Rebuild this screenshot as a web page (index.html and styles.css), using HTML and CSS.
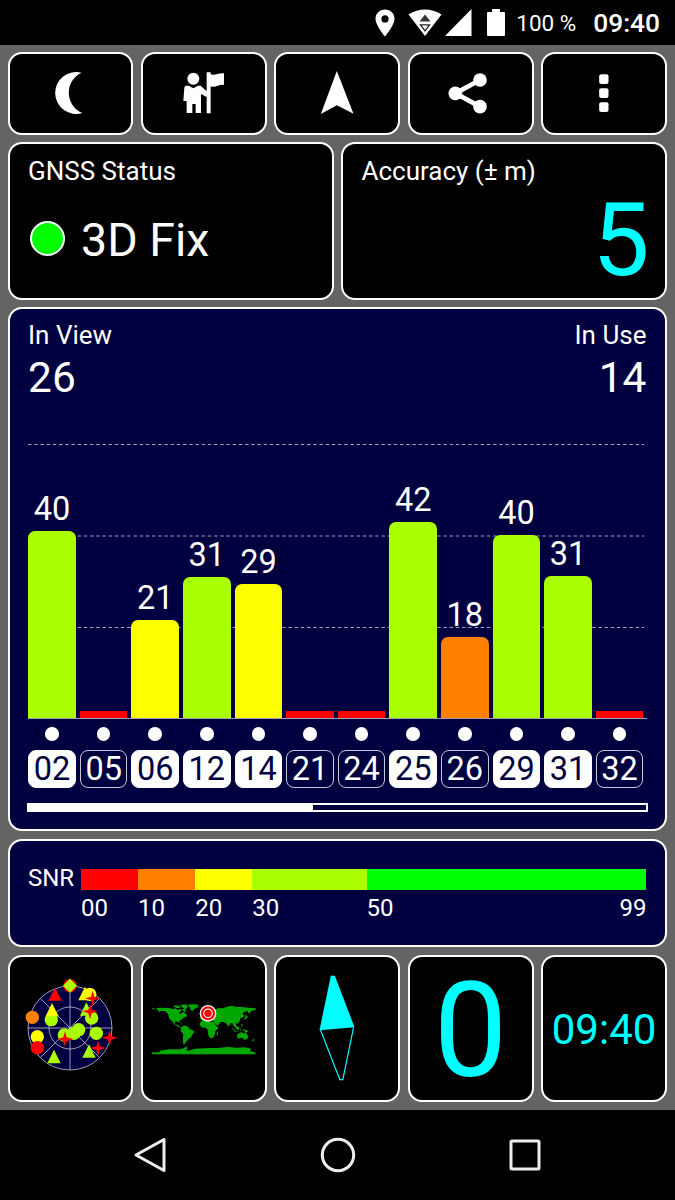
FILE: index.html
```
<!DOCTYPE html>
<html lang="en">
<head>
  <meta charset="UTF-8">
  <title>GNSS Status</title>
  <link rel="stylesheet" href="styles.css">
</head>
<body>
  <header class="statusbar">
    <svg class="pin" width="20" height="28" viewBox="0 0 20 28"><path fill="#fff" fill-rule="evenodd" d="M10 .5C4.600 .5 .5 4.500 .5 9.800C.5 16.500 10 27.500 10 27.500S19.500 16.500 19.500 9.800C19.500 4.500 15.400 .5 10 .5zM10 6.300a3.600 3.600 0 1 1 0 7.200a3.600 3.600 0 0 1 0-7.200z"/></svg>
    <svg class="wifi" width="34" height="28" viewBox="0 0 34 28">
      <path fill="#fff" d="M.5 5.500Q17-4.500 33.500 5.500L17 27z"/>
      <path fill="#333" d="M17 5.500L22.500 12.500H11.500z"/>
      <path fill="#fff" stroke="#222" stroke-width="1.300" d="M12.500 15.800H21.500L17 21.800z"/>
    </svg>
    <svg class="signal" width="27" height="27" viewBox="0 0 27 27"><path fill="#fff" d="M26.500 0V27H0z"/></svg>
    <svg class="battery" width="18" height="27" viewBox="0 0 18 27"><path fill="#fff" d="M5 0H13V3H17Q18 3 18 4V26Q18 27 17 27H1Q0 27 0 26V4Q0 3 1 3H5z"/></svg>
    <span class="percent">100 %</span>
    <span class="clock">09:40</span>
  </header>

  <main class="screen">
    <nav class="toolbar">
      <button class="tile">
        <svg width="48" height="48" viewBox="139.500 89 144 144"><path fill="#fff" d="M246 100A63 63 0 1 0 249 221A66 66 0 0 1 246 100z"/></svg>
      </button>
      <button class="tile">
        <svg width="48" height="48" viewBox="540 89 144 144">
          <circle cx="580" cy="118" r="18" fill="#fff"/>
          <path fill="#fff" d="M557 139H566L580 147L594 139H602L620 156V99H632V105C646 110 656 99 672 102V137C656 134 647 147 632 141V222H620V173L603 164V221H587V194H577V221H560V186L550 184L553 146Q554 140 557 139z"/>
        </svg>
      </button>
      <button class="tile">
        <svg width="48" height="48" viewBox="-64.500 89 144 144"><path fill="#fff" d="M7 95L57 223L7 198L-41 224z"/></svg>
      </button>
      <button class="tile">
        <svg width="48" height="48" viewBox="336 89 144 144">
          <path fill="none" stroke="#fff" stroke-width="14" d="M435 122L361 162L435 202"/>
          <circle cx="435" cy="122" r="20.500" fill="#fff"/>
          <circle cx="361" cy="162" r="20.500" fill="#fff"/>
          <circle cx="435" cy="202" r="20.500" fill="#fff"/>
        </svg>
      </button>
      <button class="tile">
        <svg width="48" height="48" viewBox="736.500 89 144 144" fill="#fff">
          <rect x="794" y="105" width="28" height="29" rx="6"/>
          <rect x="794" y="147" width="28" height="29" rx="6"/>
          <rect x="794" y="189" width="28" height="29" rx="6"/>
        </svg>
      </button>
    </nav>

    <section class="summary">
      <div class="card">
        <div class="title">GNSS Status</div>
        <div class="fix"><span class="led"></span>3D Fix</div>
      </div>
      <div class="card">
        <div class="title">Accuracy (± m)</div>
        <div class="accuracy">5</div>
      </div>
    </section>

    <section class="card blue chart">
      <div class="counts">
        <div><div class="title">In View</div><div class="count">26</div></div>
        <div class="right"><div class="title">In Use</div><div class="count">14</div></div>
      </div>

      <div class="plot">
        <svg class="lines" width="619" height="317" viewBox="0 0 619 317">
          <path d="M0 42.500H616M0 134H616M0 225.500H616"/>
        </svg>
        <div class="col"><span>40</span><div class="bar lime" style="height:187.500px"></div></div>
        <div class="col"><div class="bar none"></div></div>
        <div class="col"><span>21</span><div class="bar yellow" style="height:98.500px"></div></div>
        <div class="col"><span>31</span><div class="bar lime" style="height:141.500px"></div></div>
        <div class="col"><span>29</span><div class="bar yellow" style="height:134px"></div></div>
        <div class="col"><div class="bar none"></div></div>
        <div class="col"><div class="bar none"></div></div>
        <div class="col"><span>42</span><div class="bar lime" style="height:196.500px"></div></div>
        <div class="col"><span>18</span><div class="bar orange" style="height:81px"></div></div>
        <div class="col"><span>40</span><div class="bar lime" style="height:183.500px"></div></div>
        <div class="col"><span>31</span><div class="bar lime" style="height:142.500px"></div></div>
        <div class="col"><div class="bar none"></div></div>
      </div>

      <div class="sats">
        <div class="sat used">02</div>
        <div class="sat">05</div>
        <div class="sat used">06</div>
        <div class="sat used">12</div>
        <div class="sat used">14</div>
        <div class="sat">21</div>
        <div class="sat">24</div>
        <div class="sat used">25</div>
        <div class="sat">26</div>
        <div class="sat used">29</div>
        <div class="sat used">31</div>
        <div class="sat">32</div>
      </div>

      <div class="scroll"><div class="thumb"></div></div>
    </section>

    <section class="card blue snr">
      <div class="snr-label">SNR</div>
      <div class="scale">
        <div class="red"></div>
        <div class="orange"></div>
        <div class="yellow"></div>
        <div class="lime"></div>
        <div class="green"></div>
        <span>00</span>
        <span>10</span>
        <span>20</span>
        <span>30</span>
        <span class="ends"><b>50</b><b>99</b></span>
      </div>
    </section>

    <nav class="pages">
      <button class="tile">
        <svg width="100" height="100" viewBox="31 41 300 300">
          <circle cx="181" cy="191" r="126" fill="#000040"/>
          <g fill="none" stroke="#b8b8cc" stroke-width="2.500">
            <circle cx="181" cy="191" r="126"/>
            <circle cx="181" cy="191" r="63"/>
            <path d="M55 191H307M181 65V317M92 102L270 280M92 280L270 102"/>
          </g>
          <circle cx="181" cy="64" r="20" fill="#f00"/>
          <path fill="#af0" d="M181 43L202 64L181 85L160 64z"/>
          <path fill="#f00" d="M136 70L156 109H116z"/>
          <circle cx="68" cy="159" r="20" fill="#ff8000"/>
          <circle cx="125" cy="166" r="20" fill="#af0"/>
          <path fill="#ff0" d="M127 116L147 156H108z"/>
          <circle cx="83" cy="217" r="20" fill="#ff0"/>
          <circle cx="83" cy="250" r="20" fill="#f00"/>
          <path fill="#af0" d="M133 256L153 297H113z"/>
          <path fill="#ff0" d="M226 67L247 108H206z"/>
          <circle cx="240" cy="90" r="20" fill="#ff0"/>
          <path fill="#af0" d="M230 114L250 154H211z"/>
          <circle cx="246" cy="161" r="20" fill="#af0"/>
          <circle cx="260" cy="207" r="20" fill="#af0"/>
          <path fill="#af0" d="M238 240L258 280H218z"/>
          <circle cx="164" cy="212" r="20" fill="#af0"/>
          <circle cx="193" cy="207" r="20" fill="#af0"/>
          <circle cx="207" cy="196" r="20" fill="#af0"/>
          <g fill="#f00">
            <path id="star" d="M166 201L171 219L190 224L171 230L166 248L161 230L143 224L161 219z"/>
            <use href="#star" x="83" y="-122"/>
            <use href="#star" x="75" y="-83"/>
            <use href="#star" x="134" y="-4"/>
            <use href="#star" x="99" y="27"/>
          </g>
        </svg>
      </button>
      <button class="tile">
        <svg width="110" height="60" viewBox="27 71 330 180">
          <g fill="#00a800">
            <path d="M36 102H44V105H36zM50 102L58 100L88 101L98 104L108 102L112 107L121 103L124 110L116 114L122 118L130 113L138 118L142 126L132 129L126 135L119 139L116 146L112 141L103 143L106 151L113 151L120 158L127 160L122 161L112 156L103 151L96 141L88 133L84 119L74 110L62 110L54 115L57 109L50 107z"/>
            <path d="M99 96L108 93L118 95L122 100L109 101zM120 92L139 90L143 97L137 106L127 99zM124 104L133 103L140 111L134 113z"/>
            <path d="M142 92L160 90L176 91L172 100L164 103L158 110L151 106L150 99z"/>
            <path d="M116 142L128 145L125 147zM124 160L132 153L144 157L149 164L161 169L162 175L156 182L153 190L146 193L138 203L134 209L129 208L129 192L130 180L122 170z"/>
            <path d="M180 145L187 138L204 137L208 142L222 142L229 156L236 160L226 170L225 179L219 190L210 192L204 180L203 166L198 161L185 159L179 151zM231 175L235 171L233 182L229 183z"/>
            <path d="M181 136V128L190 126L184 121L197 116L195 107L207 99L219 103L229 105L236 101L250 102L261 97L276 94L287 98L305 98L325 100L347 102V107L334 109L328 119L323 111L312 113L308 119L313 124L305 132L301 130L299 141L292 148L286 147L291 158L288 162L280 153L279 148L273 145L265 157L260 148L252 143L242 143L233 154L226 148L221 139L209 137L204 129L194 128L189 136z"/>
            <path d="M184 108L190 106L190 116L182 118zM317 119L324 128L317 135L312 136L316 128zM274 158L282 165L287 171L282 170zM288 158L298 157L297 166L289 165zM283 170L297 172L296 174L284 172zM300 163L304 165L301 170zM303 147L308 151L306 160zM306 165L320 167L326 173L317 173z"/>
            <path d="M291 181L299 176L305 173L312 178L317 172L325 187L321 195L313 196L306 190L293 193zM338 196L343 192L341 199L335 202z"/>
            <path d="M36 234L60 234L58 229L86 225L121 225L130 222L138 217L144 221L137 227L145 229L166 223L205 221L233 221L263 218L290 220L316 219L334 224L330 230L347 235V240H36z"/>
          </g>
          <circle cx="204" cy="117" r="25" fill="#fff"/>
          <circle cx="204" cy="117" r="21" fill="#f00"/>
          <circle cx="204" cy="117" r="14.500" fill="#fff"/>
          <circle cx="204" cy="117" r="11" fill="#f00"/>
        </svg>
      </button>
      <button class="tile">
        <svg width="50" height="110" viewBox="127.500 71 150 330">
          <path fill="none" stroke="#0ff" stroke-width="3.500" d="M153 242L211 391H220L252 235"/>
          <path fill="#0ff" d="M184 79H196L255 234L150 243z"/>
        </svg>
      </button>
      <button class="tile"><span class="speed">0</span></button>
      <button class="tile"><span class="time">09:40</span></button>
    </nav>
  </main>

  <footer class="navbar">
    <svg width="36" height="36" viewBox="0 0 36 36"><path d="M32 2.500V33.500L4 18z"/></svg>
    <svg width="36" height="36" viewBox="0 0 36 36"><circle cx="18" cy="18" r="15.700"/></svg>
    <svg width="36" height="36" viewBox="0 0 36 36"><rect x="4" y="4" width="28" height="28" rx="1"/></svg>
  </footer>
</body>
</html>
```
FILE: styles.css
```
* {
  box-sizing: border-box;
}

body {
  margin: 0;
  width: 675px;
  height: 1200px;
  display: flex;
  flex-direction: column;
  background: #000;
  color: #fff;
  font-family: Roboto, sans-serif;
  overflow: hidden;
}

svg {
  display: block;
  flex-shrink: 0;
}

/* status bar */
.statusbar {
  height: 45px;
  display: flex;
  align-items: center;
  justify-content: flex-end;
  padding-right: 15px;
}

.wifi {
  margin-left: 13px;
}

.signal {
  margin-left: 3px;
}

.battery {
  margin-left: 15px;
}

.percent {
  width: 77px;
  margin-left: 11px;
  font-size: 22.5px;
  white-space: nowrap;
}

.clock {
  font-size: 26.3px;
  font-weight: 500;
}

.screen {
  height: 1065px;
  padding: 7px 8px 7.5px 7.5px;
  display: grid;
  grid-template-columns: minmax(0, 1fr);
  grid-template-rows: 82.5px 157px 524.5px 108.5px 147.5px;
  gap: 7.5px;
  background: #646464;
}

.toolbar,
.pages {
  display: grid;
  grid-template-columns: repeat(5, 1fr);
  gap: 7.5px;
}

.tile,
.card {
  background: #000;
  border: 2px solid #fff;
  border-radius: 14px;
}

.tile {
  display: flex;
  align-items: center;
  justify-content: center;
  padding: 0;
  min-width: 0;
  color: #0ff;
  font-family: inherit;
}

.card {
  padding: 12px 18.5px 5px;
}

.blue {
  background: #000040;
}

.title {
  font-size: 26px;
  line-height: 30px;
}

/* fix and accuracy */
.summary {
  display: grid;
  grid-template-columns: 1fr 1fr;
  gap: 7.5px;
}

.fix,
.accuracy {
  height: 107px;
  display: flex;
  align-items: center;
}

.fix {
  font-size: 46.5px;
}

.led {
  width: 35px;
  height: 35px;
  margin: 0 16px 3px 2px;
  border: 2px solid #fff;
  border-radius: 50%;
  background: #0f0;
}

.accuracy {
  justify-content: flex-end;
  margin-right: -3px;
  color: #0ff;
  font-size: 102px;
}

/* satellite chart */
.chart {
  padding-top: 11.5px;
}

.counts {
  display: flex;
  justify-content: space-between;
}

.count {
  font-size: 42.5px;
  line-height: 51px;
  margin-top: 2px;
}

.right {
  text-align: right;
}

.plot {
  position: relative;
  height: 316px;
  border-bottom: 1px solid #9c9cb4;
}

.plot,
.sats {
  display: grid;
  grid-template-columns: repeat(12, 47.5px);
  column-gap: 4.1px;
  padding-left: 0.3px;
}

.lines {
  position: absolute;
  top: -1px;
  left: 0;
  stroke: #a0a0b8;
  stroke-width: 1.2;
  stroke-dasharray: 3.5 2.7;
}

.col {
  position: relative;
  display: flex;
  flex-direction: column;
  justify-content: flex-end;
  text-align: center;
  font-size: 32.5px;
  line-height: 34px;
}

.bar {
  margin-top: 5px;
  border-radius: 7px 7px 0 0;
}

.none {
  height: 7px;
  border-radius: 0;
  background: #f00;
}

.red { background: #f00; }
.orange { background: #ff8000; }
.yellow { background: #ff0; }
.lime { background: #af0; }
.green { background: #0f0; }

.sats {
  margin-top: 8px;
}

.sat {
  font-size: 32.5px;
  line-height: 36px;
  text-align: center;
  border: 1px solid #c8c8d8;
  border-radius: 8px;
  margin-top: 23px;
  position: relative;
}

.sat::before {
  content: "";
  position: absolute;
  top: -24px;
  left: 16px;
  width: 13.5px;
  height: 13.5px;
  border-radius: 50%;
  background: #fff;
}

.used {
  background: #fff;
  border-color: #fff;
  color: #000040;
}

.scroll {
  height: 9px;
  margin: 15px -1px 0;
  border: 2px solid #fff;
}

.thumb {
  width: 46%;
  height: 100%;
  background: #fff;
}

/* snr legend */
.snr {
  display: flex;
  padding-top: 28px;
  font-size: 24px;
}

.snr-label {
  width: 53px;
  line-height: 19px;
}

.scale {
  flex: 1;
  display: grid;
  grid-template-columns: 10fr 10fr 10fr 20fr 49fr;
  grid-template-rows: 21.5px 36px;
  line-height: 36px;
}

.scale > * {
  min-width: 0;
}

.ends {
  display: flex;
  justify-content: space-between;
}

.ends b {
  font-weight: 400;
}

.speed {
  font-size: 131px;
  line-height: 1;
  padding-top: 6px;
}

.time {
  font-size: 42px;
  padding-top: 3px;
}

/* system buttons */
.navbar {
  height: 90px;
  display: grid;
  grid-template-columns: repeat(3, 187.5px);
  justify-content: center;
  justify-items: center;
  align-items: center;
}

.navbar svg {
  fill: none;
  stroke: #eee;
  stroke-width: 3;
  stroke-linejoin: round;
}
```
